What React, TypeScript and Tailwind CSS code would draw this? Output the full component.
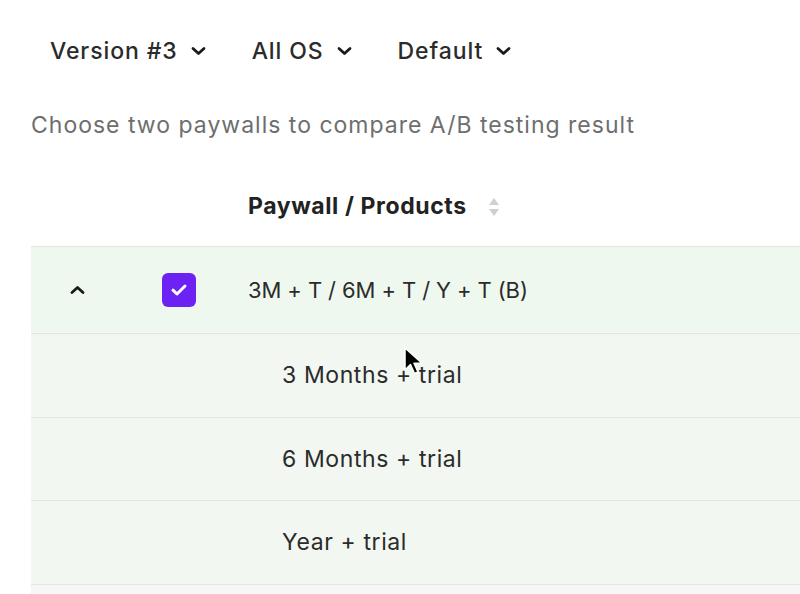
import React from "react";

const filters = ["Version #3", "All OS", "Default"];
const products = ["3 Months + trial", "6 Months + trial", "Year + trial"];

export default function App() {
  return (
    <div className="relative h-[594px] w-[800px] overflow-hidden bg-white font-['Inter',sans-serif] text-[#2b2b2b]">
      <div className="flex h-[102px] items-center gap-[46px] pl-[50px]">
        {filters.map((f) => (
          <div key={f} className="flex items-center gap-[13px]">
            <span className="text-[23px] font-medium tracking-[0.9px]">{f}</span>
            <ChevronDown />
          </div>
        ))}
      </div>

      <p className="pl-[31px] text-[23px] leading-[46px] tracking-[1px] text-[#6e6e6e]">
        Choose two paywalls to compare A/B testing result
      </p>

      <div className="ml-[31px]">
        <div className="flex h-[98px] items-center pt-[18px]">
          <div className="w-[217px]" />
          <span className="text-[23px] font-bold tracking-[0.6px] text-[#222]">
            Paywall / Products
          </span>
          <SortIcon />
        </div>

        <div className="flex h-[88px] items-center border-t border-b border-[#e4e6e4] bg-[#eef8ef]">
          <div className="flex w-[92px] justify-center">
            <ChevronUp />
          </div>
          <div className="ml-[39px] flex h-[34px] w-[34px] items-center justify-center rounded-[6px] bg-[#6b22f2]">
            <svg width="18" height="14" viewBox="0 0 18 14" fill="none">
              <path d="M3 7.2l4 3.8 8-8" stroke="white" strokeWidth="3" strokeLinecap="round" strokeLinejoin="round" />
            </svg>
          </div>
          <span className="ml-[52px] text-[22px] tracking-[-0.1px]">3M + T / 6M + T / Y + T (B)</span>
        </div>

        {products.map((p, i) => (
          <div
            key={p}
            className={
              i === 1
                ? "flex h-[83px] items-center border-b border-[#e4e6e4] bg-[#f2f7f2]"
                : "flex h-[84px] items-center border-b border-[#e4e6e4] bg-[#f2f7f2]"
            }
          >
            <span className="ml-[251px] text-[23px] tracking-[0.6px]">{p}</span>
          </div>
        ))}
        <div className="h-[20px] bg-[#f5f6f5]" />
      </div>

      {/* mouse pointer */}
      <svg className="absolute left-[403px] top-[346px]" width="20" height="30" viewBox="0 0 20 30">
        <path d="M2 2v22l5.5-5.5 4 9 3.5-1.5-4-8.8h8z" fill="black" stroke="white" strokeWidth="1.5" strokeLinejoin="round" />
      </svg>
    </div>
  );
}

function ChevronDown() {
  return (
    <svg width="15" height="10" viewBox="0 0 15 10" fill="none">
      <path d="M2 2.5l5.5 5 5.5-5" stroke="#1a1a1a" strokeWidth="2.8" strokeLinecap="round" strokeLinejoin="round" />
    </svg>
  );
}

function ChevronUp() {
  return (
    <svg width="15" height="10" viewBox="0 0 15 10" fill="none">
      <path d="M2 7.5l5.5-5 5.5 5" stroke="#1a1a1a" strokeWidth="2.8" strokeLinecap="round" strokeLinejoin="round" />
    </svg>
  );
}

function SortIcon() {
  return (
    <svg className="ml-[20px] mt-[2px]" width="14" height="22" viewBox="0 0 14 22">
      <path d="M7 2l5 7H2z" fill="#cfcfcf" />
      <path d="M7 20l5-7H2z" fill="#cfcfcf" />
    </svg>
  );
}
